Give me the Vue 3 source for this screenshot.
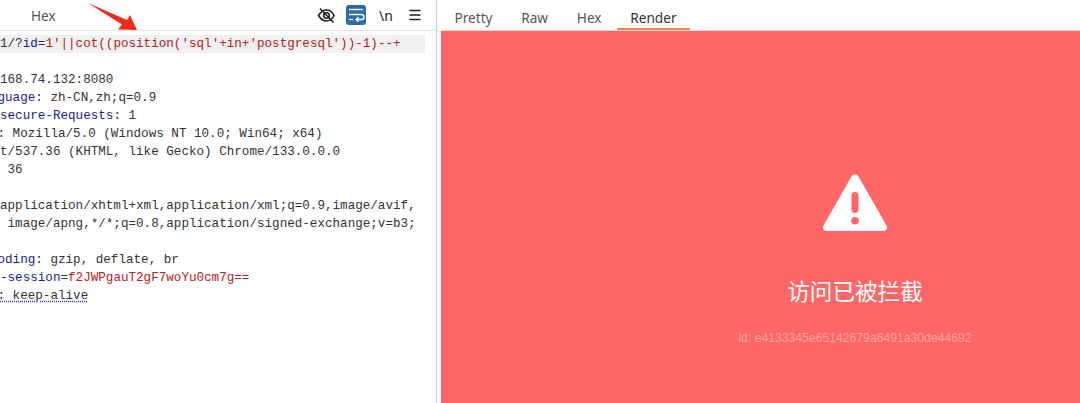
<script setup>
</script>

<template>
  <div class="app">
    <section class="left">
      <header class="bar">
        <nav class="tabs-left"><span class="tab-hex">Hex</span></nav>
        <div class="tools">
          <svg class="ic" width="20" height="20" viewBox="0 0 20 20" fill="none" stroke="#222" stroke-width="1.6">
            <path d="M2.500 10.500C5 6.500 7.500 5 10.500 5s5.500 1.500 7.500 5.500c-2 4-4.500 5.500-7.500 5.500S5 14.500 2.500 10.500z" />
            <circle cx="10.500" cy="10.500" r="2.800" />
            <path d="M4 3.500l13.500 14" />
          </svg>
          <span class="wrap-btn">
            <svg width="20" height="20" viewBox="0 0 20 20" fill="none" stroke="#fff" stroke-width="1.400">
              <path d="M3 4.500h14" />
              <path d="M3 9.500h12.500a2.500 2.500 0 0 1 0 5H10.500" />
              <path d="M12.500 12.300l-2.300 2.200 2.300 2.200" />
              <path d="M3 14.500h4" />
            </svg>
          </span>
          <span class="newline">\n</span>
          <svg class="ic" width="14" height="14" viewBox="0 0 14 14" fill="none" stroke="#222" stroke-width="1.500">
            <path d="M1.500 2.500h11M1.500 7h11M1.500 11.500h11" />
          </svg>
        </div>
      </header>
      <div class="code">
        <div class="line req"><span class="v">1/?</span><span class="k">id</span><span class="v">=</span><span class="r">1'||cot((position('sql'+in+'postgresql'))-1)--+</span></div>
        <div class="line empty"></div>
        <div class="line"><span class="v">168.74.132:8080</span></div>
        <div class="line shift"><span class="k">guage</span><span class="v">: zh-CN,zh;q=0.9</span></div>
        <div class="line"><span class="k">secure-Requests</span><span class="v">: 1</span></div>
        <div class="line shift"><span class="v">: Mozilla/5.0 (Windows NT 10.0; Win64; x64)</span></div>
        <div class="line"><span class="v">t/537.36 (KHTML, like Gecko) Chrome/133.0.0.0</span></div>
        <div class="line"><span class="v"> 36</span></div>
        <div class="line empty"></div>
        <div class="line"><span class="v">application/xhtml+xml,application/xml;q=0.9,image/avif,</span></div>
        <div class="line"><span class="v"> image/apng,*/*;q=0.8,application/signed-exchange;v=b3;</span></div>
        <div class="line empty"></div>
        <div class="line shift"><span class="k">oding</span><span class="v">: gzip, deflate, br</span></div>
        <div class="line"><span class="k">-session</span><span class="v">=</span><span class="r">f2JWPgauT2gF7woYu0cm7g==</span></div>
        <div class="line shift"><span class="v dotted">: keep-alive</span></div>
      </div>
      <svg class="arrow" width="60" height="32" viewBox="0 0 60 32">
        <path d="M0 0L39 17L42 12L49 27L30 26.500L34 21.500z" fill="#f02a1c" />
      </svg>
    </section>
    <section class="right">
      <nav class="tabs">
        <span class="tab">Pretty</span>
        <span class="tab">Raw</span>
        <span class="tab">Hex</span>
        <span class="tab active">Render</span>
      </nav>
      <main class="panel">
        <svg class="warn" width="66" height="58" viewBox="0 0 66 58">
          <path fill="#fff" fill-rule="evenodd" d="M29.500 2.500a4 4 0 0 1 7 0L64.500 51.500a3.500 3.500 0 0 1-3 5.500H4.500a3.500 3.500 0 0 1-3-5.500zM33 18a3.500 3.500 0 0 0-3.500 3.500v14a3.500 3.500 0 0 0 7 0v-14A3.500 3.500 0 0 0 33 18zM33 43a3.800 3.800 0 1 0 0 7.600a3.800 3.800 0 0 0 0-7.600z" />
        </svg>
        <h1 class="title">访问已被拦截</h1>
        <p class="rid">id: e4133345e65142679a6491a30de44692</p>
      </main>
    </section>
  </div>
</template>

<style>
html, body { margin: 0; background: #fff; overflow: hidden; }
</style>

<style scoped>
.app {
  width: 1080px;
  height: 403px;
  display: flex;
  overflow: hidden;
  background: #fff;
}
.left {
  position: relative;
  width: 436px;
  flex: none;
  border-right: 1px solid #c9c9c9;
  overflow: hidden;
}
.bar {
  height: 30px;
  border-bottom: 1px solid #e4e4e4;
  display: flex;
  align-items: center;
  justify-content: space-between;
}
.tabs-left { padding-left: 31px; }
.tab-hex {
  font: 13.600px "Noto Sans", sans-serif;
  color: #555;
}
.tools {
  display: flex;
  align-items: center;
  padding-right: 14px;
}
.ic { display: block; }
.wrap-btn {
  width: 20px;
  height: 20px;
  margin-left: 10px;
  border-radius: 3px;
  background: #2b6ca8;
  display: flex;
}
.newline {
  margin-left: 13px;
  width: 29px;
  font: 14px "Noto Sans", sans-serif;
  color: #222;
}
.code {
  padding-top: 4px;
  font: 12.600px/18px "Liberation Mono", monospace;
  white-space: pre;
}
.line { height: 18px; }
.shift { margin-left: -2.500px; }
.req { width: 425px; background: #f0f0f0; }
.k { color: #1a1a8c; }
.v { color: #333; }
.r { color: #b22222; }
.dotted {
  text-decoration: underline dotted #3030c0;
  text-underline-offset: 2px;
}
.arrow {
  position: absolute;
  left: 88px;
  top: 3px;
}
.right {
  flex: 1;
  margin-left: 4px;
  display: flex;
  flex-direction: column;
  min-width: 0;
}
.tabs {
  height: 30px;
  display: flex;
  gap: 1.800px;
  flex: none;
}
.tab {
  padding: 0 13.500px;
  font: 13.600px/36px "Noto Sans", sans-serif;
  color: #555;
  box-sizing: border-box;
  height: 30px;
}
.active {
  color: #333;
  border-bottom: 2px solid #f0854a;
}
.panel {
  flex: 1;
  background: #ff6666;
  border-top: 1px solid #ddd;
  display: flex;
  flex-direction: column;
  align-items: center;
  padding-top: 143px;
  padding-left: 189px;
  box-sizing: border-box;
}
.warn { display: block; }
.title {
  margin: 42px 0 0;
  font: 400 22.600px/34px "Noto Sans CJK SC", sans-serif;
  color: #fff;
}
.rid {
  margin: 22px 0 0;
  font: 12.200px/16px "Liberation Sans", sans-serif;
  color: rgba(255, 255, 255, 0.42);
}
</style>
